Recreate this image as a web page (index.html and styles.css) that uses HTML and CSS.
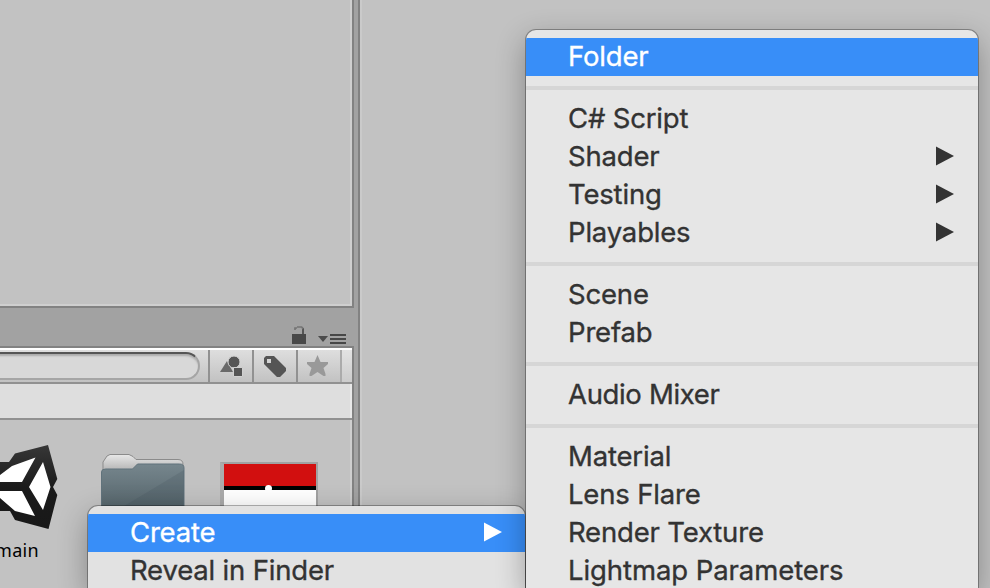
FILE: index.html
```html
<!DOCTYPE html>
<html lang="en">
<head>
<meta charset="utf-8">
<title>Project</title>
<link rel="stylesheet" href="styles.css">
</head>
<body>
<main class="editor">
  <div class="left">
    <section class="hierarchy"></section>
    <header class="tabs">
      <svg class="lock" width="16" height="20" viewBox="0 0 16 20"><path d="M1 9h14v10H1z" fill="#484848"/><path d="M11 3h2v6h-2z" fill="#555"/><path d="M4 5V3h2M6 2h5M11 2l1 2" fill="none" stroke="#747474" stroke-width="1.7"/></svg>
      <svg class="options" width="28" height="12" viewBox="0 0 28 12"><path d="M0 3h10L5 9z" fill="#4b4b4b"/><path d="M12 1h16v2H12zM12 5h16v2H12zM12 9h16v2H12z" fill="#474747"/></svg>
    </header>
    <section class="project">
      <div class="toolbar">
        <div class="search-area"><div class="search"></div></div>
        <div class="tool"><svg width="24" height="24" viewBox="0 0 24 24"><path d="M1 17L8 6l6 11H1z" fill="#696969"/><circle cx="15" cy="7" r="6" fill="#555" stroke="#d3d3d3"/><path d="M14.500 12.500h9v9h-9z" fill="#555" stroke="#d0d0d0"/></svg></div>
        <div class="tool"><svg width="24" height="24" viewBox="0 0 24 24"><path fill-rule="evenodd" d="M3 1h8l12 12v3l-6 6h-3L1 9V3zM4 4v4h4V4z" fill="#555"/></svg></div>
        <div class="tool"><svg width="24" height="24" viewBox="0 0 24 24"><path d="M10.500 0l3 7H21v2l-4.500 4 2 6v2h-2l-6-4-6 4h-2v-2l2-6L0 9V7h7.500z" fill="#999"/></svg></div>
        <div class="tool end"></div>
      </div>
      <div class="path-bar"></div>
      <div class="assets">
        <svg class="unity" width="60" height="90" viewBox="0 0 60 90">
          <defs><linearGradient id="ink" x2="0" y2="1"><stop stop-color="#373737"/><stop offset=".5" stop-color="#1b1b1b"/><stop offset="1" stop-color="#181818"/></linearGradient></defs>
          <path d="M0 21h9l6-8.500L48 4l9.300 34-4.300 8 4.300 8L48.500 88 15 79l-5-9H0z" fill="url(#ink)"/>
          <path d="M0 34L12 25 35.500 16.500 22 41H0zM0 50h22l13 25-20-5L0 57zM43 21l7.500 25L43 69 29 46z" fill="#fff"/>
        </svg>
        <span class="label">main</span>
        <svg class="folder" width="88" height="70" viewBox="0 0 88 70">
          <defs><linearGradient id="tab" x2="0" y2="1"><stop stop-color="#e8e8e8"/><stop offset=".28" stop-color="#aaa"/></linearGradient><linearGradient id="front" x2="0" y2="1"><stop stop-color="#76868d"/><stop offset="1" stop-color="#4b5a60"/></linearGradient></defs>
          <path d="M3 17V9l4-6 3-1.500h19l4 2 3 3h42q5 0 5 5v58H3z" fill="url(#tab)" stroke="#8b8b8b"/>
          <path d="M1.500 70V19q0-3 4-3h27l5-5h42q4.500 0 4.500 4v55z" fill="url(#front)" stroke="#61737c"/>
          <path d="M1 67L84 17v53H1z" fill="#3f5058" opacity=".2"/>
        </svg>
        <div class="thumbnail"><div class="dot"></div></div>
      </div>
    </section>
  </div>
  <div class="splitter"></div>
  <div class="right"></div>
</main>

<nav class="menu context">
  <div class="item active">Create<svg class="arrow" width="18" height="20" viewBox="0 0 18 20"><path d="M0 .5L18 10 0 19.500z"/></svg></div>
  <div class="item">Reveal in Finder</div>
</nav>
<nav class="menu submenu">
  <div class="item active">Folder</div>
  <div class="separator"></div>
  <div class="item">C# Script</div>
  <div class="item">Shader<svg class="arrow" width="18" height="20" viewBox="0 0 18 20"><path d="M0 .5L18 10 0 19.500z"/></svg></div>
  <div class="item">Testing<svg class="arrow" width="18" height="20" viewBox="0 0 18 20"><path d="M0 .5L18 10 0 19.500z"/></svg></div>
  <div class="item">Playables<svg class="arrow" width="18" height="20" viewBox="0 0 18 20"><path d="M0 .5L18 10 0 19.500z"/></svg></div>
  <div class="separator"></div>
  <div class="item">Scene</div>
  <div class="item">Prefab</div>
  <div class="separator"></div>
  <div class="item tight">Audio Mixer</div>
  <div class="separator"></div>
  <div class="item">Material</div>
  <div class="item">Lens Flare</div>
  <div class="item">Render Texture</div>
  <div class="item loose">Lightmap Parameters</div>
</nav>
</body>
</html>
```
FILE: styles.css
```css
* { box-sizing: border-box; }
body { margin: 0; width: 990px; height: 588px; overflow: hidden; position: relative; background: #c2c2c2; font-family: Inter, "Liberation Sans", sans-serif; }
svg { display: block; flex: none; }
.editor { display: flex; height: 588px; background: #a2a2a2; }
.left { width: 354px; display: flex; flex-direction: column; }
.hierarchy { height: 308px; flex: none; background: #c2c2c2; border: solid #828282; border-width: 0 2px 2px 0; box-shadow: inset -2px -2px #cfcfcf; }
.tabs { height: 38px; flex: none; display: flex; justify-content: flex-end; align-items: flex-start; padding: 17px 8px 0 0; gap: 11px; }
.options { margin-top: 8px; }
.project { flex: 1; min-height: 0; background: #c2c2c2; border: solid #828282; border-width: 2px 2px 0 0; }
.toolbar { height: 36px; display: flex; border-top: 2px solid #fff; border-bottom: 2px solid #919191; background: linear-gradient(#dedede, #c2c2c2); }
.search-area { flex: 1; padding-top: 2px; overflow: hidden; }
.search { width: 204px; height: 28px; margin-left: -4px; border: 2px solid #a5a5a5; border-top-color: #555; border-radius: 0 14px 14px 0; background: #d8d8d8; box-shadow: inset 0 3px 2px -1px #aaa; }
.tool { width: 44px; border-left: 2px solid #919191; padding: 5px 0 0 9px; }
.tool.end { width: 12px; padding: 0; border-left-color: #ababab; background: rgba(255,255,255,.16); }
.path-bar { height: 36px; background: #dedede; border-bottom: 2px solid #919191; box-shadow: inset -2px 0 #e9e9e9; }
.assets { height: 168px; display: grid; grid-template-columns: 100px 120px 132px; grid-template-rows: 114px 54px; box-shadow: inset -2px 0 #cecece; overflow: hidden; }
.unity { margin-top: 21px; }
.label { grid-row: 2; font: 18px "Noto Sans", sans-serif; line-height: 32px; letter-spacing: .3px; color: #000; margin-left: -5px; }
.folder { grid-column: 2; grid-row: 1; margin-top: 33px; }
.thumbnail { grid-column: 3; grid-row: 1; width: 98px; height: 60px; margin-top: 42px; border: 2px solid #a1a1a1; border-left: 4px solid #ababab; background: linear-gradient(#d20f0f 22px, #000 22px 26px, #fff 26px) padding-box; position: relative; }
.dot { position: absolute; left: 41px; top: 21px; width: 7px; height: 7px; background: #fff; border-radius: 50%; }
.splitter { width: 6px; border-right: 2px solid #828282; }
.right { flex: 1; background: #c2c2c2; border-left: 2px solid #cacaca; }
.menu { position: absolute; bottom: 0; overflow: hidden; padding-top: 8px; background: #e6e6e6; color: #333; box-shadow: 0 0 0 1px rgba(0,0,0,.3), 0 10px 30px rgba(0,0,0,.32); border-radius: 10px 10px 0 0; }
.context { left: 88px; top: 506px; width: 437px; background: #e2e2e2; }
.submenu { left: 526px; top: 30px; width: 452px; }
.item { height: 38px; padding: 0 24px 2px 42px; display: flex; align-items: center; justify-content: space-between; font-size: 27.5px; line-height: 36px; letter-spacing: -.18px; -webkit-text-stroke: .35px currentColor; white-space: nowrap; }
.item.tight { letter-spacing: -.34px; }
.item.loose { letter-spacing: -.08px; }
.context .item { padding-right: 23px; }
.active { color: #fff; background: #388ef8; }
.arrow { fill: currentColor; stroke: none; }
.separator { height: 24px; padding: 10px 0; }
.separator::before { content: ""; display: block; height: 4px; background: #d6d6d6; }
```
